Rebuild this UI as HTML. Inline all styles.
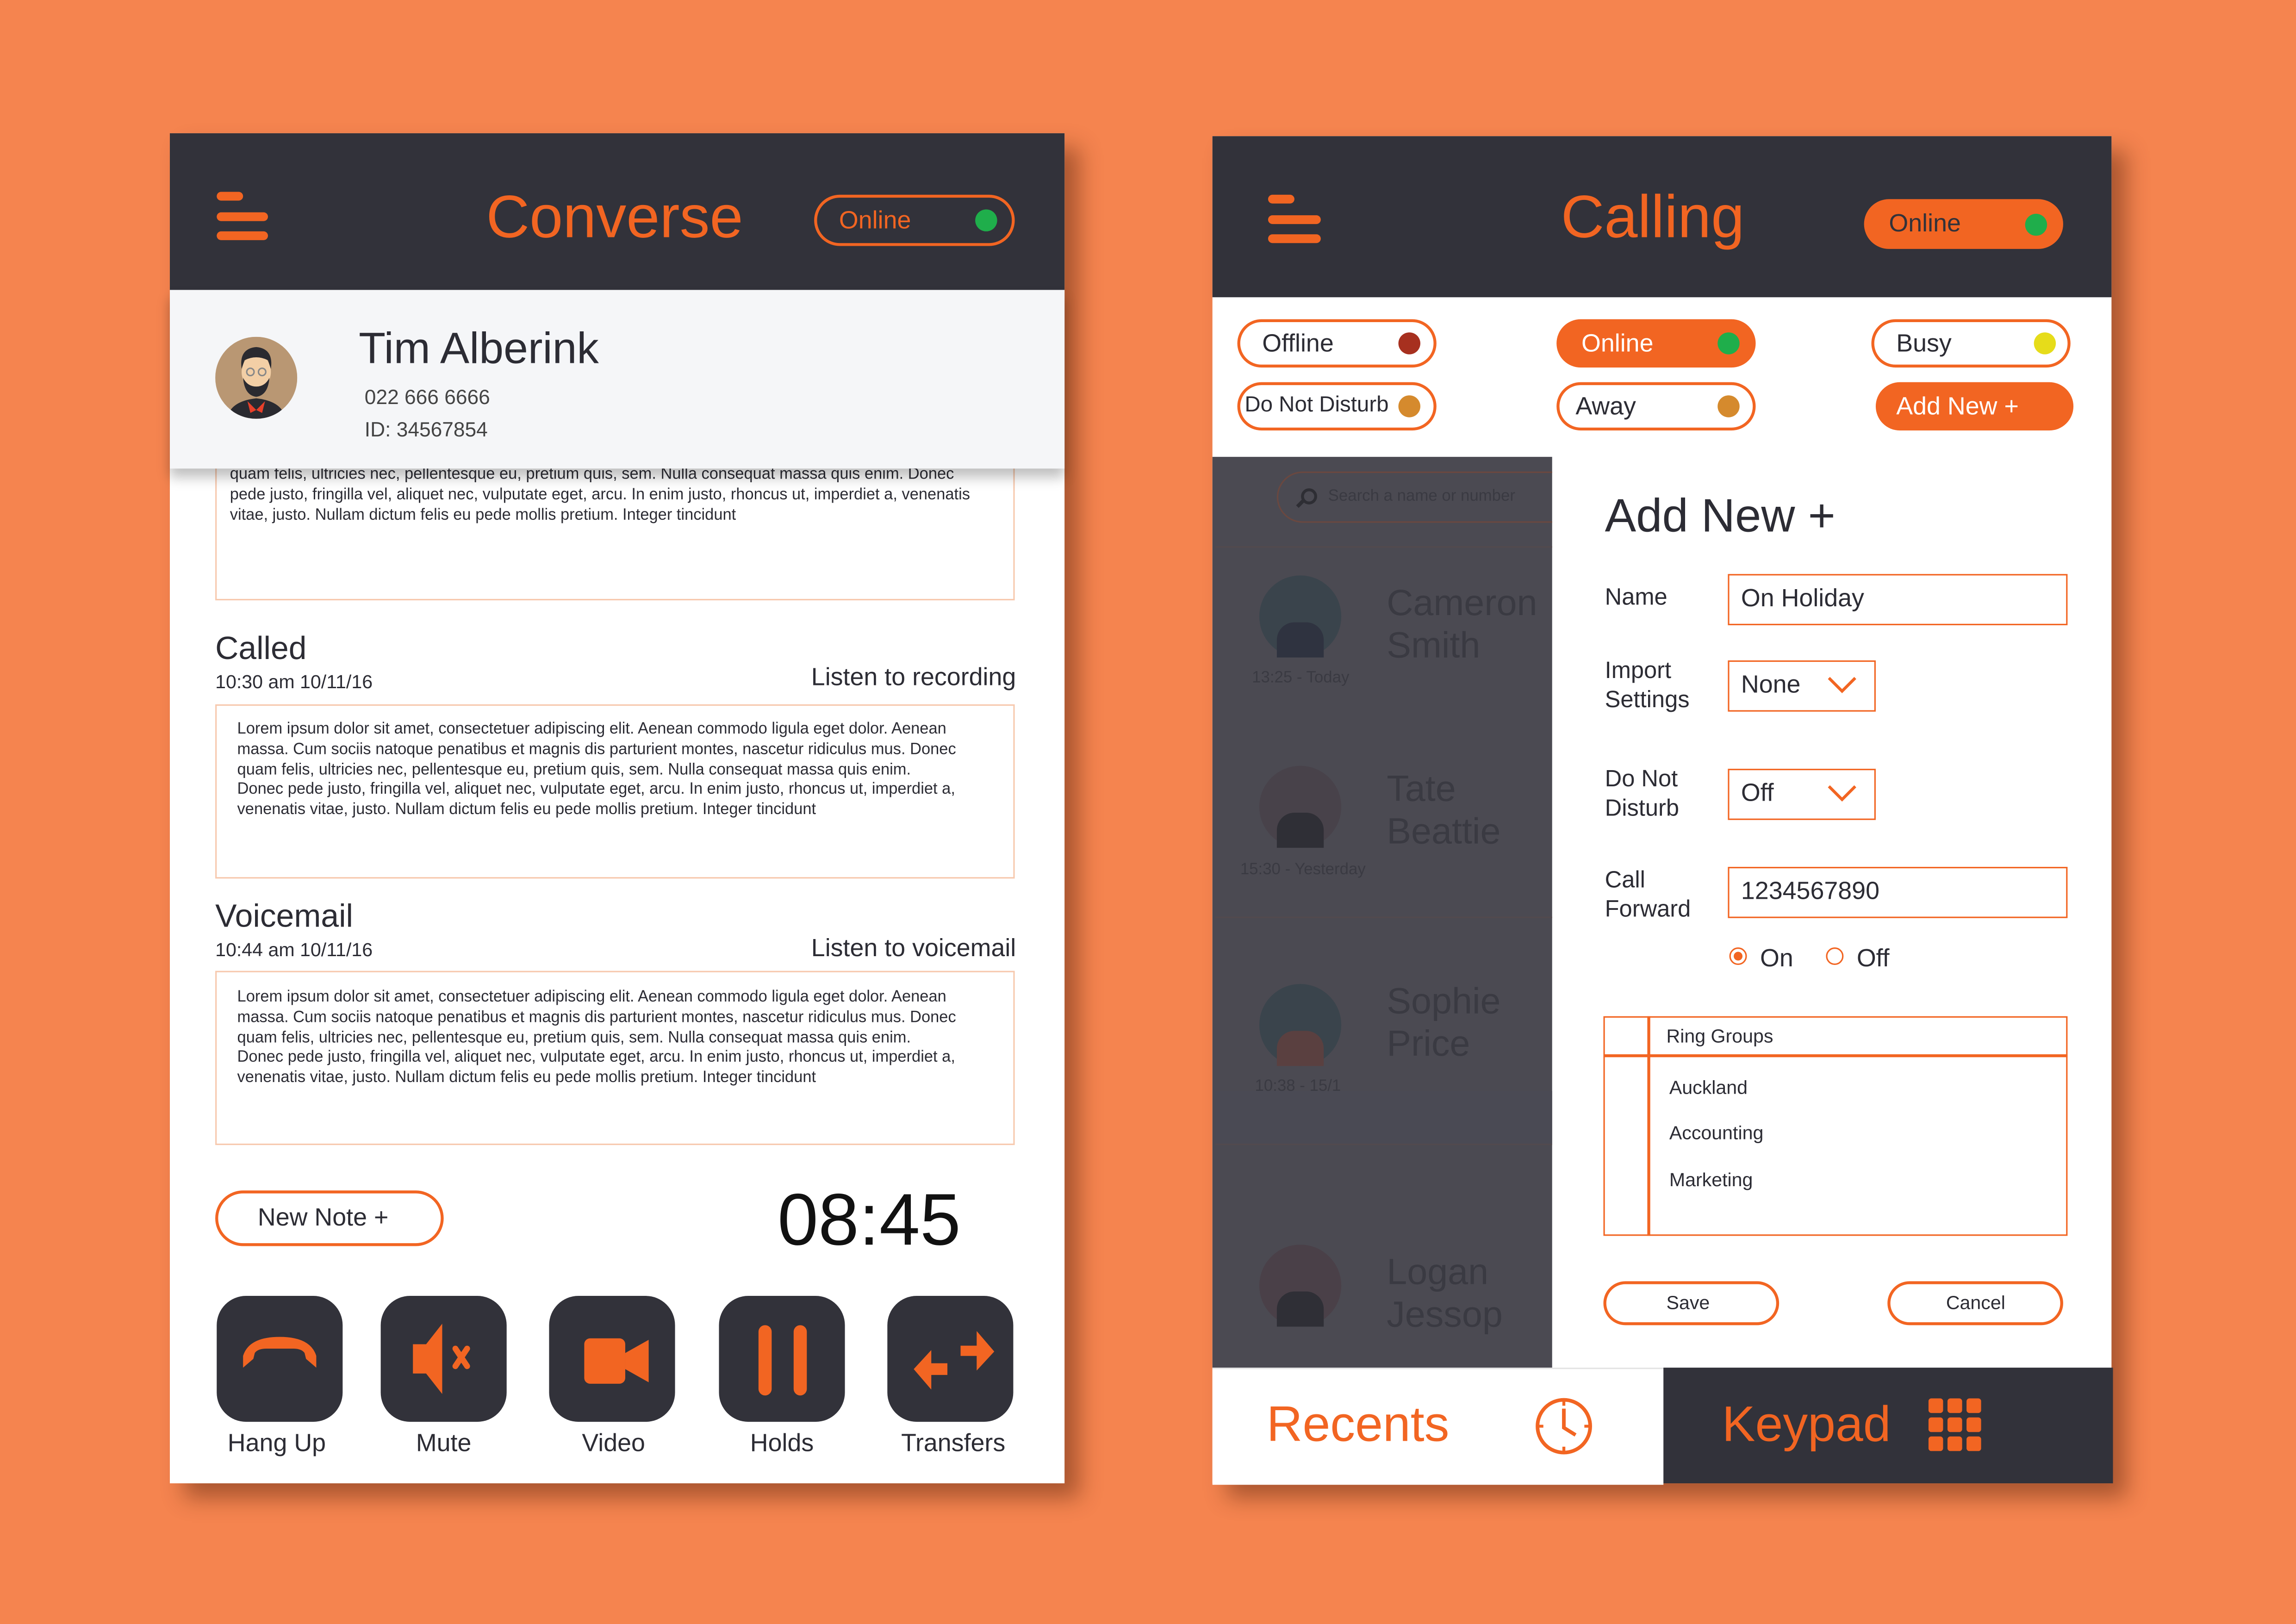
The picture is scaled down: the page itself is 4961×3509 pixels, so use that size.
<!DOCTYPE html>
<html><head><meta charset="utf-8">
<style>
html,body{margin:0;padding:0;width:4961px;height:3508px;overflow:hidden;background:#F5844F}
#s{position:absolute;left:0;top:0;width:1568px;height:1109px;transform:scale(3.16390);transform-origin:0 0;font-family:"Liberation Sans",sans-serif;color:#2c2c34}
.a{position:absolute}
.t{position:absolute;white-space:nowrap;line-height:1}
.or{color:#F26522}
.pill{position:absolute;box-sizing:border-box;border:2px solid #F26522;border-radius:20px}
.dot{position:absolute;border-radius:50%;width:15px;height:15px}
.box{position:absolute;box-sizing:border-box;border:1px solid #f7c9ae;background:#fff}
.lor{position:absolute;font-size:11px;line-height:13.8px;white-space:nowrap;transform:scaleX(0.99);transform-origin:0 0;color:#2c2c34}
.btn{position:absolute;width:86px;height:86px;border-radius:20px;background:#32323a;top:885px}
.lbl{position:absolute;top:976px;font-size:17px;text-align:center;width:120px;color:#2c2c34}
.bar{position:absolute;height:6px;border-radius:3px;background:#F26522}
.gray{color:#3a3a42}
.inp{position:absolute;box-sizing:border-box;border:1.5px solid #F26522;background:#fff;font-size:17px;padding-left:8px;color:#2c2c34}
.fl{position:absolute;font-size:16px;line-height:20px;color:#2c2c34}
</style></head><body><div id="s">

<!-- LEFT CARD -->
<div class="a" style="left:116px;top:91px;width:611px;height:922px;background:#fff;box-shadow:10px 10px 14px rgba(80,30,10,.45)"></div>
<div class="a" style="left:116px;top:91px;width:611px;height:107px;background:#32323a"></div>
<div class="bar" style="left:148px;top:131px;width:18px"></div>
<div class="bar" style="left:148px;top:145px;width:35px"></div>
<div class="bar" style="left:148px;top:158px;width:35px"></div>
<div class="t or" style="left:332px;top:128px;font-size:41px">Converse</div>
<div class="pill" style="left:556px;top:133px;width:137px;height:35px"></div>
<div class="t or" style="left:573px;top:142px;font-size:17px">Online</div>
<div class="dot" style="left:666px;top:143px;background:#1fae4b"></div>

<!-- note box 1 -->
<div class="box" style="left:147px;top:300px;width:546px;height:110px"></div>
<div class="lor" style="left:157px;top:318px">quam felis, ultricies nec, pellentesque eu, pretium quis, sem. Nulla consequat massa quis enim. Donec<br>pede justo, fringilla vel, aliquet nec, vulputate eget, arcu. In enim justo, rhoncus ut, imperdiet a, venenatis<br>vitae, justo. Nullam dictum felis eu pede mollis pretium. Integer tincidunt</div>

<!-- profile band -->
<div class="a" style="left:116px;top:198px;width:611px;height:122px;background:#f5f6f8;box-shadow:0 6px 8px rgba(0,0,0,.25)"></div>
<svg class="a" style="left:147px;top:230px" width="56" height="56" viewBox="0 0 56 56">
<circle cx="28" cy="28" r="28" fill="#b99773"/>
<clipPath id="c1"><circle cx="28" cy="28" r="28"/></clipPath>
<g clip-path="url(#c1)">
<path d="M8 56 Q10 44 28 42 Q46 44 48 56Z" fill="#2a2a30"/>
<path d="M22 44 L28 50 L34 44 L32 52 L28 50 L24 52Z" fill="#e8402a"/>
<ellipse cx="28" cy="24" rx="10" ry="12" fill="#f3cfa6"/>
<path d="M18 22 Q16 8 28 7 Q40 8 38 22 L36 16 Q28 12 20 16Z" fill="#2a2a30"/>
<path d="M19 28 Q20 40 28 41 Q36 40 37 28 Q34 34 28 34 Q22 34 19 28Z" fill="#2a2a30"/>
<circle cx="24" cy="24" r="2.5" fill="none" stroke="#888" stroke-width="1"/><circle cx="32" cy="24" r="2.5" fill="none" stroke="#888" stroke-width="1"/>
</g></svg>
<div class="t" style="left:245px;top:224px;font-size:30px">Tim Alberink</div>
<div class="t" style="left:249px;top:264px;font-size:14px;color:#444">022 666 6666</div>
<div class="t" style="left:249px;top:286px;font-size:14px;color:#444">ID: 34567854</div>

<!-- Called -->
<div class="t" style="left:147px;top:432px;font-size:22px">Called</div>
<div class="t" style="left:147px;top:459px;font-size:13px">10:30 am 10/11/16</div>
<div class="t" style="left:554px;top:454px;font-size:17px">Listen to recording</div>
<div class="box" style="left:147px;top:481px;width:546px;height:119px"></div>
<div class="lor" style="left:162px;top:492px">Lorem ipsum dolor sit amet, consectetuer adipiscing elit. Aenean commodo ligula eget dolor. Aenean<br>massa. Cum sociis natoque penatibus et magnis dis parturient montes, nascetur ridiculus mus. Donec<br>quam felis, ultricies nec, pellentesque eu, pretium quis, sem. Nulla consequat massa quis enim.<br>Donec pede justo, fringilla vel, aliquet nec, vulputate eget, arcu. In enim justo, rhoncus ut, imperdiet a,<br>venenatis vitae, justo. Nullam dictum felis eu pede mollis pretium. Integer tincidunt</div>

<!-- Voicemail -->
<div class="t" style="left:147px;top:615px;font-size:22px">Voicemail</div>
<div class="t" style="left:147px;top:642px;font-size:13px">10:44 am 10/11/16</div>
<div class="t" style="left:554px;top:639px;font-size:17px">Listen to voicemail</div>
<div class="box" style="left:147px;top:663px;width:546px;height:119px"></div>
<div class="lor" style="left:162px;top:675px">Lorem ipsum dolor sit amet, consectetuer adipiscing elit. Aenean commodo ligula eget dolor. Aenean<br>massa. Cum sociis natoque penatibus et magnis dis parturient montes, nascetur ridiculus mus. Donec<br>quam felis, ultricies nec, pellentesque eu, pretium quis, sem. Nulla consequat massa quis enim.<br>Donec pede justo, fringilla vel, aliquet nec, vulputate eget, arcu. In enim justo, rhoncus ut, imperdiet a,<br>venenatis vitae, justo. Nullam dictum felis eu pede mollis pretium. Integer tincidunt</div>

<div class="pill" style="left:147px;top:813px;width:156px;height:38px"></div>
<div class="t" style="left:176px;top:823px;font-size:17px">New Note +</div>
<div class="t" style="left:531px;top:808px;font-size:50px;color:#111">08:45</div>

<!-- buttons -->
<div class="btn" style="left:148px"><svg width="86" height="86" viewBox="0 0 86 86"><path d="M18 49 L18 41 Q22 28 43 28 Q64 28 68 41 L68 49 L61 43 L60 39 Q58 36 52 36 L34 36 Q28 36 26 39 L25 43Z" fill="#F26522"/></svg></div>
<div class="btn" style="left:260px"><svg width="86" height="86" viewBox="0 0 86 86"><path d="M22 33 L31 33 L42 19 L42 67 L31 53 L22 53Z" fill="#F26522"/><path d="M51 36 L59 48 M59 36 L51 48" stroke="#F26522" stroke-width="4" stroke-linecap="round"/></svg></div>
<div class="btn" style="left:375px"><svg width="86" height="86" viewBox="0 0 86 86"><rect x="24" y="29" width="28" height="31" rx="4" fill="#F26522"/><path d="M52 39 L68 30 L68 59 L52 50Z" fill="#F26522"/></svg></div>
<div class="btn" style="left:491px"><svg width="86" height="86" viewBox="0 0 86 86"><rect x="27" y="20" width="9" height="48" rx="4.5" fill="#F26522"/><rect x="51" y="20" width="9" height="48" rx="4.5" fill="#F26522"/></svg></div>
<div class="btn" style="left:606px"><svg width="86" height="86" viewBox="0 0 86 86"><path d="M50 34 L61 34 L61 24 L73 38 L61 51 L61 41 L50 41Z" fill="#F26522"/><path d="M41 46 L30 46 L30 37 L18 50 L30 64 L30 54 L41 54Z" fill="#F26522"/></svg></div>
<div class="lbl" style="left:129px">Hang Up</div>
<div class="lbl" style="left:243px">Mute</div>
<div class="lbl" style="left:359px">Video</div>
<div class="lbl" style="left:474px">Holds</div>
<div class="lbl" style="left:591px">Transfers</div>

<!-- RIGHT CARD -->
<div class="a" style="left:828px;top:93px;width:614px;height:920px;background:#fff;box-shadow:10px 10px 14px rgba(80,30,10,.45)"></div>
<div class="a" style="left:828px;top:93px;width:614px;height:110px;background:#32323a"></div>
<div class="bar" style="left:866px;top:133px;width:18px"></div>
<div class="bar" style="left:866px;top:147px;width:36px"></div>
<div class="bar" style="left:866px;top:160px;width:36px"></div>
<div class="t or" style="left:1066px;top:128px;font-size:41px">Calling</div>
<div class="a" style="left:1273px;top:136px;width:136px;height:34px;border-radius:17px;background:#F26522"></div>
<div class="t" style="left:1290px;top:144px;font-size:17px;color:#32323a">Online</div>
<div class="dot" style="left:1383px;top:146px;background:#1fae4b"></div>

<!-- status pills -->
<div class="pill" style="left:845px;top:218px;width:136px;height:33px"></div>
<div class="t" style="left:862px;top:226px;font-size:17px">Offline</div>
<div class="dot" style="left:955px;top:227px;background:#a7301f"></div>
<div class="a" style="left:1063px;top:218px;width:136px;height:33px;border-radius:17px;background:#F26522"></div>
<div class="t" style="left:1080px;top:226px;font-size:17px;color:#fff">Online</div>
<div class="dot" style="left:1173px;top:227px;background:#1fae4b"></div>
<div class="pill" style="left:1278px;top:218px;width:136px;height:33px"></div>
<div class="t" style="left:1295px;top:226px;font-size:17px">Busy</div>
<div class="dot" style="left:1389px;top:227px;background:#e6dc1a"></div>
<div class="pill" style="left:845px;top:261px;width:136px;height:33px"></div>
<div class="t" style="left:850px;top:269px;font-size:15px">Do Not Disturb</div>
<div class="dot" style="left:955px;top:270px;background:#d58a2d"></div>
<div class="pill" style="left:1063px;top:261px;width:136px;height:33px"></div>
<div class="t" style="left:1076px;top:269px;font-size:17px">Away</div>
<div class="dot" style="left:1173px;top:270px;background:#d58a2d"></div>
<div class="a" style="left:1281px;top:261px;width:135px;height:33px;border-radius:17px;background:#F26522"></div>
<div class="t" style="left:1295px;top:269px;font-size:17px;color:#fff">Add New +</div>

<!-- gray overlay panel -->
<div class="a" style="left:828px;top:312px;width:232px;height:622px;background:#4b4a52;overflow:hidden">
<div class="a" style="left:44px;top:10px;width:220px;height:35px;box-sizing:border-box;border:1.5px solid #6a4840;border-radius:18px"></div>
</div>
<svg class="a" style="left:884px;top:333px" width="16" height="14"><circle cx="10" cy="6" r="4.5" fill="none" stroke="#2e2e34" stroke-width="2"/><path d="M6 9 L2 13" stroke="#2e2e34" stroke-width="2.5"/></svg>
<div class="t" style="left:907px;top:334px;font-size:11px;color:#3a3a42">Search a name or number</div>
<div class="a" style="left:830px;top:373px;width:230px;height:1px;background:#524a4e"></div>
<div class="a" style="left:830px;top:626px;width:230px;height:1px;background:#524a4e"></div>
<div class="a" style="left:830px;top:781px;width:230px;height:1px;background:#524a4e"></div>
<div class="a" style="left:830px;top:745px;width:230px;height:36px;background:#4a4a54"></div>
<div class="a" style="left:860px;top:393px;width:56px;height:56px;border-radius:50%;background:#3a444c"></div>
<div class="a" style="left:860px;top:523px;width:56px;height:56px;border-radius:50%;background:#48424a"></div>
<div class="a" style="left:860px;top:672px;width:56px;height:56px;border-radius:50%;background:#3a444c"></div>
<div class="a" style="left:860px;top:850px;width:56px;height:56px;border-radius:50%;background:#4a4048"></div>
<div class="a" style="left:872px;top:425px;width:32px;height:24px;border-radius:12px 12px 0 0;background:#2f3340"></div>
<div class="a" style="left:872px;top:555px;width:32px;height:24px;border-radius:12px 12px 0 0;background:#2f2f36"></div>
<div class="a" style="left:872px;top:704px;width:32px;height:24px;border-radius:12px 12px 0 0;background:#5a4040"></div>
<div class="a" style="left:872px;top:882px;width:32px;height:24px;border-radius:12px 12px 0 0;background:#2f2f36"></div>
<div class="t gray" style="left:947px;top:398px;font-size:25px;line-height:29px">Cameron<br>Smith</div>
<div class="t gray" style="left:947px;top:525px;font-size:25px;line-height:29px">Tate<br>Beattie</div>
<div class="t gray" style="left:947px;top:670px;font-size:25px;line-height:29px">Sophie<br>Price</div>
<div class="t gray" style="left:947px;top:855px;font-size:25px;line-height:29px">Logan<br>Jessop</div>
<div class="t gray" style="left:855px;top:458px;font-size:11px">13:25 - Today</div>
<div class="t gray" style="left:847px;top:589px;font-size:11px">15:30 - Yesterday</div>
<div class="t gray" style="left:857px;top:737px;font-size:11px">10:38 - 15/1</div>

<!-- form -->
<div class="t" style="left:1096px;top:336px;font-size:32px">Add New +</div>
<div class="fl" style="left:1096px;top:399px">Name</div>
<div class="inp" style="left:1180px;top:392px;width:232px;height:35px;line-height:32px">On Holiday</div>
<div class="fl" style="left:1096px;top:449px">Import<br>Settings</div>
<div class="inp" style="left:1180px;top:451px;width:101px;height:35px;line-height:32px">None</div>
<svg class="a" style="left:1248px;top:462px" width="20" height="12"><path d="M1 1 L10 10 L19 1" fill="none" stroke="#F26522" stroke-width="2"/></svg>
<div class="fl" style="left:1096px;top:523px">Do Not<br>Disturb</div>
<div class="inp" style="left:1180px;top:525px;width:101px;height:35px;line-height:32px">Off</div>
<svg class="a" style="left:1248px;top:536px" width="20" height="12"><path d="M1 1 L10 10 L19 1" fill="none" stroke="#F26522" stroke-width="2"/></svg>
<div class="fl" style="left:1096px;top:592px">Call<br>Forward</div>
<div class="inp" style="left:1180px;top:592px;width:232px;height:35px;line-height:32px">1234567890</div>
<div class="a" style="left:1181px;top:647px;width:12px;height:12px;border-radius:50%;border:1.5px solid #F26522;box-sizing:border-box"></div>
<div class="a" style="left:1184px;top:650px;width:6px;height:6px;border-radius:50%;background:#F26522"></div>
<div class="t" style="left:1202px;top:646px;font-size:17px">On</div>
<div class="a" style="left:1247px;top:647px;width:12px;height:12px;border-radius:50%;border:1.5px solid #F26522;box-sizing:border-box"></div>
<div class="t" style="left:1268px;top:646px;font-size:17px">Off</div>

<div class="a" style="left:1095px;top:694px;width:317px;height:150px;box-sizing:border-box;border:1.5px solid #F26522"></div>
<div class="a" style="left:1095px;top:720px;width:317px;height:1.5px;background:#F26522"></div>
<div class="a" style="left:1125px;top:694px;width:1.5px;height:150px;background:#F26522"></div>
<div class="t" style="left:1138px;top:701px;font-size:13px">Ring Groups</div>
<div class="t" style="left:1140px;top:736px;font-size:13px">Auckland</div>
<div class="t" style="left:1140px;top:767px;font-size:13px">Accounting</div>
<div class="t" style="left:1140px;top:799px;font-size:13px">Marketing</div>

<div class="pill" style="left:1095px;top:875px;width:120px;height:30px"></div>
<div class="t" style="left:1138px;top:883px;font-size:13px">Save</div>
<div class="pill" style="left:1289px;top:875px;width:120px;height:30px"></div>
<div class="t" style="left:1329px;top:883px;font-size:13px">Cancel</div>

<!-- bottom bar -->
<div class="a" style="left:828px;top:934px;width:308px;height:79px;background:#fff;border-top:1px solid #e4e4e4"></div>
<div class="t or" style="left:865px;top:956px;font-size:34px">Recents</div>
<svg class="a" style="left:1048px;top:954px" width="40" height="40" viewBox="0 0 40 40"><circle cx="20" cy="20" r="18" fill="none" stroke="#F26522" stroke-width="2.5"/><path d="M20 8 L20 21 L28 26" fill="none" stroke="#F26522" stroke-width="2.5"/><path d="M20 3v3M20 34v3M3 20h3M34 20h3" stroke="#F26522" stroke-width="2"/></svg>
<div class="a" style="left:1136px;top:934px;width:307px;height:79px;background:#32323a"></div>
<div class="t or" style="left:1176px;top:956px;font-size:34px">Keypad</div>
<svg class="a" style="left:1317px;top:955px" width="36" height="36"><g fill="#F26522"><rect x="0" y="0" width="10" height="10" rx="2"/><rect x="13" y="0" width="10" height="10" rx="2"/><rect x="26" y="0" width="10" height="10" rx="2"/><rect x="0" y="13" width="10" height="10" rx="2"/><rect x="13" y="13" width="10" height="10" rx="2"/><rect x="26" y="13" width="10" height="10" rx="2"/><rect x="0" y="26" width="10" height="10" rx="2"/><rect x="13" y="26" width="10" height="10" rx="2"/><rect x="26" y="26" width="10" height="10" rx="2"/></g></svg>

</div></body></html>
